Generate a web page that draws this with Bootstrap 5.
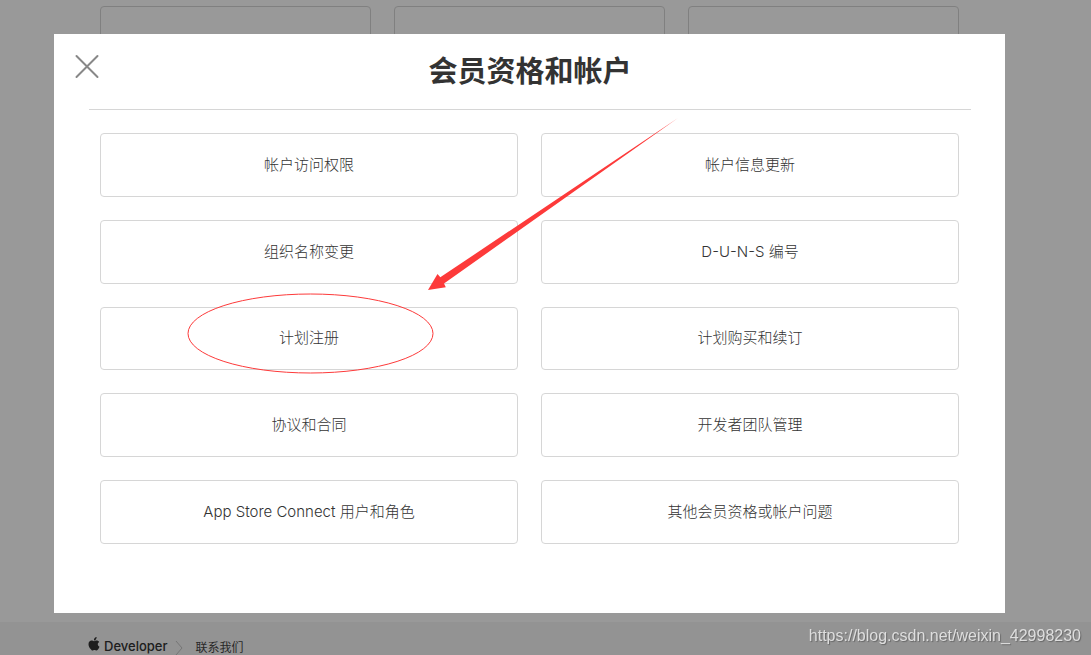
<!DOCTYPE html>
<html lang="zh-CN">
<head>
<meta charset="utf-8">
<meta name="viewport" content="width=device-width, initial-scale=1">
<title>会员资格和帐户</title>
<link rel="stylesheet" href="https://cdn.jsdelivr.net/npm/bootstrap@5.3.0/dist/css/bootstrap.min.css">
<style>
  body { font-family: Inter, "Noto Sans CJK SC", sans-serif; color: #333; background: #fff; }
  .page { min-height: 100vh; padding: 0; }
  .topics { display: grid; grid-template-columns: repeat(3, 1fr); gap: 23px; padding: 6px 132px 0 100px; }
  .topic { min-height: 64px; border: 1px solid #d6d6d6; border-radius: 4px; }
  .site-footer { background: #f5f5f5; padding: 14px 132px 0 88px; height: 33px; overflow: hidden; line-height: 20px; }
  .brand-link { color: #333; font-size: 13px; font-weight: 500; }
  .crumb-link { color: #444; font-size: 12px; line-height: 24px; }
  .shade { background: rgba(0, 0, 0, .4); }
  .sheet-dialog { max-width: none; margin: 34px 86px 42px 54px; pointer-events: auto; }
  .sheet { border: 0; border-radius: 0; color: inherit; min-height: 579px; }
  .sheet-head { margin: 0 34px 0 35px; height: 76px; border-bottom: 1px solid #d6d6d6; }
  .sheet-title { font-size: 29px; font-weight: 700; line-height: 75px; }
  .close-btn { position: absolute; left: 20px; top: 20px; width: 26px; height: 26px; }
  .choices { display: grid; grid-template-columns: 1fr 1fr; grid-auto-rows: 1fr; gap: 23px; min-height: 411px; padding: 0 11px; margin: 23px 35px 0; }
  .choice { border: 1px solid #d6d6d6; border-radius: 4px; color: #333; font-size: 15px; font-weight: 300; line-height: 20px; }
  .choice:hover { border-color: #888; }
  .marks { left: 0; top: 0; pointer-events: none; }
  .source-url { right: 10px; bottom: 8px; z-index: 1060; color: #dedede; font: 16px/22px "Liberation Sans", Arial, sans-serif; text-shadow: 1px 1px 1px rgba(0, 0, 0, .3); }
</style>
<script defer src="https://cdn.jsdelivr.net/npm/bootstrap@5.3.0/dist/js/bootstrap.bundle.min.js"></script>
</head>
<body class="overflow-hidden">
<div class="page d-flex flex-column">
  <main class="flex-grow-1">
    <div class="topics">
      <div class="topic"></div>
      <div class="topic"></div>
      <div class="topic"></div>
    </div>
  </main>
  <footer class="site-footer d-flex align-items-start">
    <a href="#" class="brand-link d-flex text-decoration-none">
      <svg width="12" height="16" viewBox="0 -1 12 16" class="me-1" fill="#333" aria-hidden="true"><path d="M8.600.1c.1 1-.3 1.800-.8 2.400-.5.600-1.200 1-1.900.9-.1-.9.300-1.700.8-2.300C7.200.500 8 .1 8.600.1zM11.200 5c-.9.500-1.400 1.300-1.400 2.300 0 1.200.7 2 1.700 2.500-.3.900-.7 1.600-1.200 2.300-.5.700-1 1.400-1.800 1.400-.8 0-1-.5-2-.5s-1.200.5-2 .5c-.8 0-1.300-.7-1.900-1.500C1.300 10.700.5 9 .5 7.300.5 4.900 2 3.600 3.600 3.600c.9 0 1.600.6 2.500.6.700 0 1.500-.7 2.600-.7 1 0 1.900.5 2.500 1.500z"/></svg>
      Developer
    </a>
    <svg width="8" height="24" viewBox="0 0 8 24" fill="none" stroke="#c4c4c4" class="ms-2" aria-hidden="true"><path d="M1 5l6 7-6 7"/></svg>
    <a href="#" class="crumb-link text-decoration-none ms-2 ps-1">联系我们</a>
  </footer>
</div>

<div class="modal d-block shade overflow-hidden" tabindex="-1" role="dialog" aria-modal="true" aria-labelledby="sheetTitle">
  <div class="modal-dialog sheet-dialog">
    <div class="modal-content sheet">
      <div class="sheet-head">
        <button type="button" class="close-btn btn p-0 border-0 d-flex" aria-label="关闭">
          <svg width="26" height="26" viewBox="0 0 26 26" fill="none" stroke="#888" stroke-width="2" stroke-linecap="round"><path d="M2.500 2l21 21M23.500 2l-21 21"/></svg>
        </button>
        <h1 class="sheet-title text-center m-0" id="sheetTitle">会员资格和帐户</h1>
      </div>
      <div class="choices">
        <a href="#" class="choice d-flex align-items-center justify-content-center text-decoration-none">帐户访问权限</a>
        <a href="#" class="choice d-flex align-items-center justify-content-center text-decoration-none">帐户信息更新</a>
        <a href="#" class="choice d-flex align-items-center justify-content-center text-decoration-none">组织名称变更</a>
        <a href="#" class="choice d-flex align-items-center justify-content-center text-decoration-none">D-U-N-S 编号</a>
        <a href="#" class="choice d-flex align-items-center justify-content-center text-decoration-none">计划注册</a>
        <a href="#" class="choice d-flex align-items-center justify-content-center text-decoration-none">计划购买和续订</a>
        <a href="#" class="choice d-flex align-items-center justify-content-center text-decoration-none">协议和合同</a>
        <a href="#" class="choice d-flex align-items-center justify-content-center text-decoration-none">开发者团队管理</a>
        <a href="#" class="choice d-flex align-items-center justify-content-center text-decoration-none">App Store Connect 用户和角色</a>
        <a href="#" class="choice d-flex align-items-center justify-content-center text-decoration-none">其他会员资格或帐户问题</a>
      </div>
      <svg class="marks position-absolute" width="640" height="350" viewBox="0 0 640 350" aria-hidden="true">
        <ellipse cx="256.500" cy="299.500" rx="122.500" ry="39.500" fill="none" stroke="#fd3a3a"/>
        <path fill="#fd3a3a" d="M374 256l9.500-16 2.800 3.300L624 84 390 249.500l1.800 3.800z"/>
      </svg>
    </div>
  </div>
</div>
<div class="source-url position-fixed">https://blog.csdn.net/weixin_42998230</div>
</body>
</html>
